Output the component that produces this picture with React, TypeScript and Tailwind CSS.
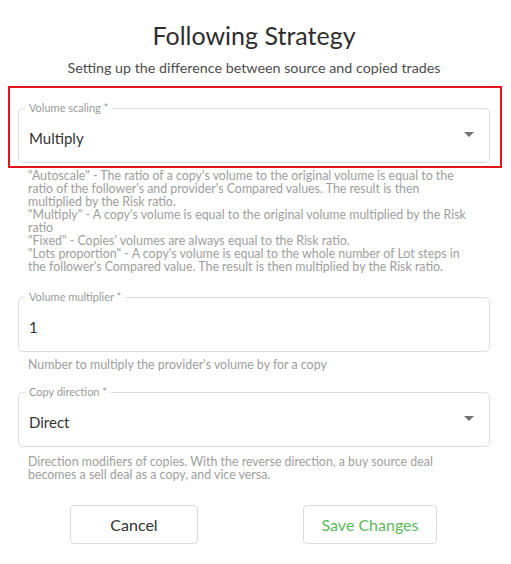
import React from "react";

const font = { fontFamily: "Lato, 'Open Sans', sans-serif" };

function Caret() {
  return (
    <svg width="10" height="5" viewBox="0 0 10 5" className="mb-[7px] mr-[5px]">
      <path d="M0 0 L10 0 L5 5 Z" fill="#757575" />
    </svg>
  );
}

function Field({
  label,
  value,
  select,
}: {
  label: string;
  value: string;
  select?: boolean;
}) {
  return (
    <fieldset className="border border-[#dedede] rounded-[5px] p-0">
      <legend className="ml-[6px] px-[4px] text-[11px] leading-[12px] text-[#9a9a9a]">
        {label}
      </legend>
      <div className="h-[48px] px-[10px] flex items-center justify-between">
        <span className="text-[15px] leading-[22px] text-[#333333]">{value}</span>
        {select && <Caret />}
      </div>
    </fieldset>
  );
}

const helper = "px-[10px] text-[12.4px] leading-[13px] text-[#9e9e9e]";

export default function App() {
  return (
    <div className="w-[511px] h-[564px] bg-white overflow-hidden" style={font}>
      <div className="ml-[18px] w-[472px] flex flex-col">
        <h1 className="mt-[20px] text-center text-[25px] leading-[30px] text-[#2e2e2e]">
          Following Strategy
        </h1>
        <p className="mt-[8px] text-center text-[14.3px] leading-[20px] text-[#4d4d4d]">
          Setting up the difference between source and copied trades
        </p>
        <div className="mt-[8px] -ml-[10px] -mr-[12px] border-2 border-[#e3141c] pl-[8px] pr-[10px] pt-[14px] pb-[3px]">
          <Field label="Volume scaling *" value="Multiply" select />
        </div>
        <div className={`mt-[1px] ${helper}`}>
          <div>"Autoscale" - The ratio of a copy's volume to the original volume is equal to the</div>
          <div>ratio of the follower's and provider's Compared values. The result is then</div>
          <div>multiplied by the Risk ratio.</div>
          <div>"Multiply" - A copy's volume is equal to the original volume multiplied by the Risk</div>
          <div>ratio</div>
          <div>"Fixed" - Copies' volumes are always equal to the Risk ratio.</div>
          <div>"Lots proportion" - A copy's volume is equal to the whole number of Lot steps in</div>
          <div>the follower's Compared value. The result is then multiplied by the Risk ratio.</div>
        </div>
        <div className="mt-[18px]">
          <Field label="Volume multiplier *" value="1" />
        </div>
        <div className={`mt-[6px] ${helper}`}>
          Number to multiply the provider's volume by for a copy
        </div>
        <div className="mt-[15px]">
          <Field label="Copy direction *" value="Direct" select />
        </div>
        <div className={`mt-[8px] ${helper} leading-[13.5px]`}>
          <div>Direction modifiers of copies. With the reverse direction, a buy source deal</div>
          <div>becomes a sell deal as a copy, and vice versa.</div>
        </div>
        <div className="mt-[24px] -ml-[2px] w-[472px] grid grid-cols-2">
          <div className="flex justify-center">
            <button className="w-[128px] h-[39px] border border-[#dcdcdc] rounded-[4px] text-[16px] text-[#333333] bg-white">
              Cancel
            </button>
          </div>
          <div className="flex justify-center">
            <button className="w-[134px] h-[39px] border border-[#dcdcdc] rounded-[4px] text-[16px] text-[#5cb85c] bg-white">
              Save Changes
            </button>
          </div>
        </div>
      </div>
    </div>
  );
}
